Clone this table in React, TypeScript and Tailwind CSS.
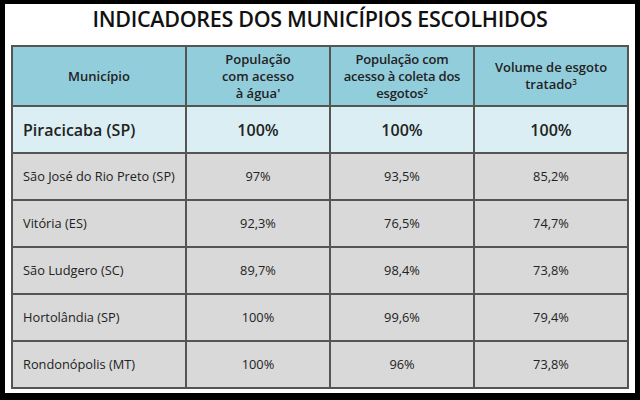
export default function App() {
  const rows = [
    ["São José do Rio Preto (SP)", "97%", "93,5%", "85,2%"],
    ["Vitória (ES)", "92,3%", "76,5%", "74,7%"],
    ["São Ludgero (SC)", "89,7%", "98,4%", "73,8%"],
    ["Hortolândia (SP)", "100%", "99,6%", "79,4%"],
    ["Rondonópolis (MT)", "100%", "96%", "73,8%"],
  ];
  const cell = "border-2 border-[#555555]";
  return (
    <div className="w-[640px] h-[400px] bg-black pt-[4px] pl-[5px]" style={{ fontFamily: '"Open Sans", "Liberation Sans", sans-serif' }}>
      <div className="w-[630px] h-[389px] bg-white flex flex-col items-center">
        <div className="h-[41px] pt-[4px] leading-none text-[21.5px] font-semibold text-[#111111] tracking-[-0.3px]">
          INDICADORES DOS MUNICÍPIOS ESCOLHIDOS
        </div>
        <table className="border-collapse w-[616px] table-fixed text-[#222222]">
          <colgroup>
            <col className="w-[174px]" />
            <col className="w-[144px]" />
            <col className="w-[144px]" />
            <col className="w-[154px]" />
          </colgroup>
          <thead>
            <tr className="h-[60px] bg-[#92cddc] text-[13px] leading-[17px] text-center">
              <th className={`${cell} font-semibold`}>Município</th>
              <th className={`${cell} font-semibold`}>População<br />com acesso<br />à água'</th>
              <th className={`${cell} font-semibold tracking-[-0.2px]`}>População com<br />acesso à coleta dos<br />esgotos<sup className="text-[8px]">2</sup></th>
              <th className={`${cell} font-semibold`}>Volume de esgoto<br />tratado<sup className="text-[8px]">3</sup></th>
            </tr>
          </thead>
          <tbody>
            <tr className="h-[47px] bg-[#dbeef3] text-[16px] font-semibold">
              <td className={`${cell} pl-[10px]`}>Piracicaba (SP)</td>
              <td className={`${cell} text-center`}>100%</td>
              <td className={`${cell} text-center`}>100%</td>
              <td className={`${cell} text-center`}>100%</td>
            </tr>
            {rows.map((r) => (
              <tr key={r[0]} className="h-[47px] bg-[#d9d9d9] text-[12.8px]">
                <td className={`${cell} pl-[10px]`}>{r[0]}</td>
                <td className={`${cell} text-center`}>{r[1]}</td>
                <td className={`${cell} text-center`}>{r[2]}</td>
                <td className={`${cell} text-center`}>{r[3]}</td>
              </tr>
            ))}
          </tbody>
        </table>
      </div>
    </div>
  );
}
